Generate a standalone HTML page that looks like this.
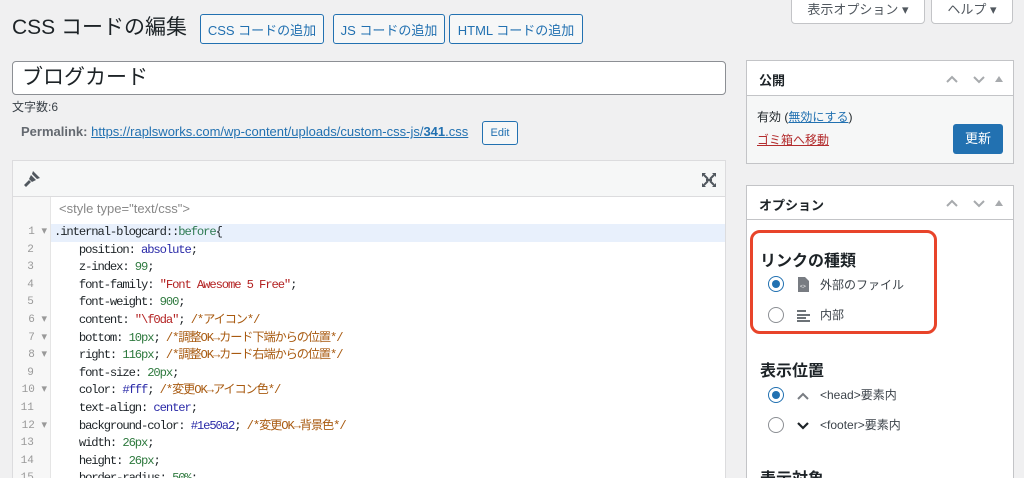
<!DOCTYPE html>
<html style="width:1024px;height:478px;overflow:hidden"><head><meta charset="utf-8"><style>
*{box-sizing:border-box;margin:0;padding:0}
body{width:1024px;height:478px;overflow:hidden;background:#f0f0f1;font-family:"Liberation Sans","Noto Sans CJK JP",sans-serif;color:#1d2327;position:relative}
.a{position:absolute}
.btn{position:absolute;border:1px solid #2271b1;border-radius:3px;background:#f6f7f7;color:#2271b1;font-size:13px;display:flex;align-items:center;justify-content:center;white-space:nowrap}
.code{font-family:"Liberation Mono","Noto Sans CJK JP",monospace;font-size:12.2px;letter-spacing:-1.1px;line-height:17.6px;white-space:pre;color:#1d2327}
.kw{color:#2a2aa8}.num{color:#2f7a3f}.str{color:#b32222}.cm{color:#a85a10}.sel{color:#2e7a52}
.hd{font-size:13px;font-weight:bold}
.radio{position:absolute;width:16px;height:16px;border:1px solid #8c8f94;border-radius:50%;background:#fff}
.radio.on{border-color:#2271b1}
.radio.on:after{content:"";position:absolute;left:3px;top:3px;width:8px;height:8px;border-radius:50%;background:#2271b1}
</style></head><body>
<div class="a" style="left:12px;top:12px;font-size:21px;line-height:32px;white-space:nowrap">CSS コードの編集</div>
<div class="btn" style="left:200px;top:14px;width:124px;height:30px">CSS コードの追加</div>
<div class="btn" style="left:333px;top:14px;width:112px;height:30px">JS コードの追加</div>
<div class="btn" style="left:449px;top:14px;width:134px;height:30px">HTML コードの追加</div>
<div class="a" style="left:791px;top:-3px;width:134px;height:27px;background:#fff;border:1px solid #c3c4c7;border-radius:0 0 4px 4px;font-size:13px;color:#50575e;text-align:center;line-height:24px">表示オプション ▾</div>
<div class="a" style="left:931px;top:-3px;width:82px;height:27px;background:#fff;border:1px solid #c3c4c7;border-radius:0 0 4px 4px;font-size:13px;color:#50575e;text-align:center;line-height:24px">ヘルプ ▾</div>

<div class="a" style="left:12px;top:61px;width:714px;height:34px;background:#fff;border:1px solid #8c8f94;border-radius:4px;font-size:21px;padding-left:9px;line-height:31px">ブログカード</div>
<div class="a" style="left:12px;top:98px;font-size:12px;color:#3c434a">文字数:6</div>
<div class="a" style="left:21px;top:124px;font-size:13px;color:#646970;white-space:nowrap"><b>Permalink:</b> <span style="color:#2271b1;text-decoration:underline">https://raplsworks.com/wp-content/uploads/custom-css-js/<b>341</b>.css</span></div>
<div class="btn" style="left:482px;top:121px;width:36px;height:24px;font-size:11px">Edit</div>

<div class="a" style="left:12px;top:160px;width:714px;height:318px;background:#fff;border:1px solid #dcdcde;border-bottom:none;overflow:hidden">
 <div class="a" style="left:0;top:0;width:712px;height:36px;background:#f6f7f7;border-bottom:1px solid #dcdcde"></div>
 <svg class="a" style="left:10px;top:9px" width="18" height="18" viewBox="0 0 18 18"><path d="M10 1l7 7-3 1-5-5zM8 5l5 5-4 2-3-3zM6 10l2 2-5 5-2-2z" fill="#50575e"/></svg>
 <svg class="a" style="left:688px;top:11px" width="16" height="16" viewBox="0 0 16 16" stroke="#50575e" stroke-width="2" fill="#50575e"><path d="M3 3l4 4M13 3l-4 4M3 13l4-4M13 13l-4-4" /><path d="M1 1h4L1 5zM15 1h-4l4 4zM1 15h4l-4-4zM15 15h-4l4-4z" stroke="none"/><rect x="5" y="7" width="6" height="2" stroke="none"/></svg>
 <div class="a" style="left:0;top:36px;width:38px;height:300px;background:#f7f7f7;border-right:1px solid #e5e5e5"></div>
 <div class="a" style="left:46px;top:40px;font-size:13px;color:#888">&lt;style type="text/css"&gt;</div>
 <div class="a" style="left:38px;top:63px;width:676px;height:18px;background:#e8f0fc"></div>
 <div class="a code" style="left:0;top:63px;width:36px;text-align:right;color:#999;font-size:11px;letter-spacing:0;padding-right:2px">1 ▾
2  
3  
4  
5  
6 ▾
7 ▾
8 ▾
9  
10 ▾
11  
12 ▾
13  
14  
15  </div>
 <div class="a code" style="left:41px;top:63px">.internal-blogcard::<span class="sel">before</span>{
    position: <span class="kw">absolute</span>;
    z-index: <span class="num">99</span>;
    font-family: <span class="str">"Font Awesome 5 Free"</span>;
    font-weight: <span class="num">900</span>;
    content: <span class="str">"\f0da"</span>; <span class="cm">/*アイコン*/</span>
    bottom: <span class="num">10px</span>; <span class="cm">/*調整OK→カード下端からの位置*/</span>
    right: <span class="num">116px</span>; <span class="cm">/*調整OK→カード右端からの位置*/</span>
    font-size: <span class="num">20px</span>;
    color: <span class="kw">#fff</span>; <span class="cm">/*変更OK→アイコン色*/</span>
    text-align: <span class="kw">center</span>;
    background-color: <span class="kw">#1e50a2</span>; <span class="cm">/*変更OK→背景色*/</span>
    width: <span class="num">26px</span>;
    height: <span class="num">26px</span>;
    border-radius: <span class="num">50%</span>;</div>
</div>

<div class="a" style="left:746px;top:60px;width:268px;height:104px;background:#f6f7f7;border:1px solid #c3c4c7">
 <div class="a" style="left:0;top:0;width:266px;height:35px;background:#fff;border-bottom:1px solid #c3c4c7"></div>
 <div class="a hd" style="left:12px;top:9px">公開</div>
 <svg class="a" style="left:198px;top:12px" width="60" height="12"><path d="M2 9l5-5 5 5M29 4l5 5 5-5" stroke="#a7aaad" stroke-width="2" fill="none"/><path d="M50 9l4-6 4 6z" fill="#a7aaad"/></svg>
 <div class="a" style="left:10px;top:47px;font-size:12px">有効 (<span style="color:#2271b1;text-decoration:underline">無効にする</span>)</div>
 <div class="a" style="left:10px;top:70px;font-size:12px;color:#b32d2e;text-decoration:underline">ゴミ箱へ移動</div>
 <div class="a" style="left:206px;top:63px;width:50px;height:30px;background:#2271b1;border-radius:3px;color:#fff;font-size:13px;text-align:center;line-height:30px">更新</div>
</div>

<div class="a" style="left:746px;top:185px;width:268px;height:300px;background:#fff;border:1px solid #c3c4c7">
 <div class="a" style="left:0;top:0;width:266px;height:34px;border-bottom:1px solid #c3c4c7"></div>
 <div class="a hd" style="left:12px;top:9px">オプション</div>
 <svg class="a" style="left:198px;top:11px" width="60" height="12"><path d="M2 9l5-5 5 5M29 4l5 5 5-5" stroke="#a7aaad" stroke-width="2" fill="none"/><path d="M50 9l4-6 4 6z" fill="#a7aaad"/></svg>
 <div class="a" style="left:3px;top:44px;width:187px;height:104px;border:3px solid #e8442a;border-radius:10px"></div>
 <div class="a" style="left:13px;top:61px;font-size:16px;font-weight:bold">リンクの種類</div>
 <div class="radio on" style="left:21px;top:90px"></div>
 <svg class="a" style="left:51px;top:91px" width="11" height="15" viewBox="0 0 11 15"><path d="M0 0h7l4 4v11H0z" fill="#787c82"/><text x="2" y="11" font-size="5" fill="#fff">&lt;&gt;</text></svg>
 <div class="a" style="left:73px;top:90px;font-size:12px;color:#3c434a">外部のファイル</div>
 <div class="radio" style="left:21px;top:121px"></div>
 <svg class="a" style="left:50px;top:124px" width="14" height="12"><path d="M0 1h9M0 5h13M0 8h9M0 11h13" stroke="#3c434a" stroke-width="1.6"/></svg>
 <div class="a" style="left:73px;top:120px;font-size:12px;color:#3c434a">内部</div>
 <div class="a" style="left:13px;top:171px;font-size:16px;font-weight:bold">表示位置</div>
 <div class="radio on" style="left:21px;top:201px"></div>
 <svg class="a" style="left:49px;top:205px" width="14" height="10"><path d="M2 8l5-5 5 5" stroke="#787c82" stroke-width="2" fill="none"/></svg>
 <div class="a" style="left:73px;top:200px;font-size:12px;color:#3c434a">&lt;head&gt;要素内</div>
 <div class="radio" style="left:21px;top:231px"></div>
 <svg class="a" style="left:49px;top:235px" width="14" height="10"><path d="M2 2l5 5 5-5" stroke="#1d2327" stroke-width="2.2" fill="none"/></svg>
 <div class="a" style="left:73px;top:230px;font-size:12px;color:#3c434a">&lt;footer&gt;要素内</div>
 <div class="a" style="left:13px;top:279px;font-size:16px;font-weight:bold">表示対象</div>
</div>
</body></html>
